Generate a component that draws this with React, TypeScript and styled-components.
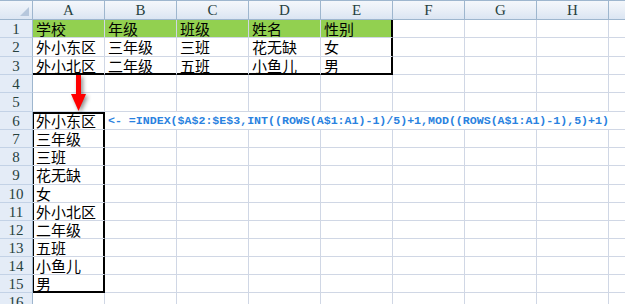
import React from 'react'
import styled, { createGlobalStyle } from 'styled-components'

const GlobalStyle = createGlobalStyle`
  html, body {
    margin: 0;
    padding: 0;
    background: #ffffff;
  }
`

const COLUMNS = ['A', 'B', 'C', 'D', 'E', 'F', 'G', 'H', 'I']
// bottom-border-inclusive heights of rows 1..16
const ROW_HEIGHTS = [18, 19, 18, 18, 19, 18, 18, 18, 19, 18, 18, 18, 18, 18, 18, 18]

const FORMULA = '<- =INDEX($A$2:$E$3,INT((ROWS(A$1:A1)-1)/5)+1,MOD((ROWS(A$1:A1)-1),5)+1)'

const SOURCE: string[][] = [
  ['学校', '年级', '班级', '姓名', '性别'],
  ['外小东区', '三年级', '三班', '花无缺', '女'],
  ['外小北区', '二年级', '五班', '小鱼儿', '男'],
]

const RESULT = ['外小东区', '三年级', '三班', '花无缺', '女', '外小北区', '二年级', '五班', '小鱼儿', '男']

const Sheet = styled.div`
  position: relative;
  width: 625px;
  height: 304px;
  overflow: hidden;
  display: grid;
  grid-template-columns: 33px repeat(9, 72px);
  grid-auto-rows: min-content;
  background: #ffffff;
`

const Corner = styled.div`
  position: relative;
  box-sizing: border-box;
  height: 20px;
  border-top: 1px solid #9eb6ce;
  border-right: 1px solid #9eb6ce;
  border-bottom: 1px solid #9eb6ce;
  background: linear-gradient(#f2f6fb, #dce6f3);

  &::after {
    content: '';
    position: absolute;
    right: 3px;
    bottom: 3px;
    border-style: solid;
    border-width: 0 0 9px 9px;
    border-color: transparent transparent #b6c7dc transparent;
  }
`

const ColHeader = styled.div`
  height: 20px;
  box-sizing: border-box;
  border-top: 1px solid #9eb6ce;
  border-right: 1px solid #9eb6ce;
  border-bottom: 1px solid #9eb6ce;
  background: linear-gradient(#f4f7fb 0%, #e9eff7 50%, #dbe5f2 100%);
  color: #27413e;
  font-family: 'Liberation Serif', 'DejaVu Serif', serif;
  font-size: 15px;
  line-height: 19px;
  text-align: center;
`

const RowHeader = styled.div<{ $h: number }>`
  height: ${({ $h }) => $h}px;
  box-sizing: border-box;
  border-right: 1px solid #9eb6ce;
  border-bottom: 1px solid #c3d2e6;
  background: #e4ecf7;
  color: #27413e;
  font-family: 'Liberation Serif', 'DejaVu Serif', serif;
  font-size: 15px;
  line-height: ${({ $h }) => $h}px;
  text-align: center;
`

const Cell = styled.div<{
  $h: number
  $fill?: string
  $thickRight?: boolean
  $thickBottom?: boolean
  $thickTop?: boolean
  $thickLeft?: boolean
}>`
  height: ${({ $h }) => $h}px;
  box-sizing: border-box;
  padding-left: 3px;
  border-right: 1px solid ${({ $thickRight }) => ($thickRight ? '#000' : '#d0d7e5')};
  border-bottom: 1px solid ${({ $thickBottom }) => ($thickBottom ? '#000' : '#d0d7e5')};
  background: ${({ $fill }) => $fill || '#ffffff'};
  box-shadow: ${({ $thickRight, $thickBottom, $thickTop, $thickLeft }) =>
    [
      $thickRight && 'inset -1px 0 0 #000',
      $thickBottom && 'inset 0 -1px 0 #000',
      $thickTop && 'inset 0 2px 0 #000',
      $thickLeft && 'inset 1px 0 0 #000',
    ]
      .filter(Boolean)
      .join(', ') || 'none'};
  color: #000;
  font-family: 'Noto Sans CJK SC', 'Noto Sans', sans-serif;
  font-size: 15px;
  line-height: ${({ $h }) => $h - 1}px;
  white-space: nowrap;
`

const FormulaCell = styled.div<{ $h: number }>`
  grid-column: span 8;
  height: ${({ $h }) => $h}px;
  box-sizing: border-box;
  padding-left: 3px;
  border-bottom: 1px solid #d0d7e5;
  color: #2a82e0;
  font-family: 'Liberation Mono', 'DejaVu Sans Mono', monospace;
  font-weight: bold;
  font-size: 11.6px;
  line-height: ${({ $h }) => $h - 1}px;
  white-space: nowrap;
`

const Arrow = styled.svg`
  position: absolute;
  left: 70px;
  top: 75px;
  filter: drop-shadow(2px 2px 2px rgba(0, 0, 0, 0.45));
`

const rowCells = (rowIndex: number, h: number) => {
  const row = rowIndex + 1
  const cells: React.ReactNode[] = []

  if (row === 6) {
    cells.push(
      <Cell key='A' $h={h} $thickTop $thickRight $thickLeft>
        {RESULT[0]}
      </Cell>,
    )
    cells.push(
      <FormulaCell key='B' $h={h}>
        {FORMULA}
      </FormulaCell>,
    )
    return cells
  }

  COLUMNS.forEach((col, ci) => {
    let text = ''
    let fill: string | undefined
    let thickRight = false
    let thickBottom = false
    let thickLeft = false

    if (row <= 3 && ci < 5) {
      text = SOURCE[row - 1][ci]
      if (row === 1) fill = '#92d050'
      if (ci === 4) thickRight = true
      if (row === 3) thickBottom = true
    }
    if (row >= 7 && row <= 15 && ci === 0) {
      text = RESULT[row - 6]
      thickRight = true
      thickLeft = true
      if (row === 15) thickBottom = true
    }

    cells.push(
      <Cell
        key={col}
        $h={h}
        $fill={fill}
        $thickRight={thickRight}
        $thickBottom={thickBottom}
        $thickLeft={thickLeft}
      >
        {text}
      </Cell>,
    )
  })
  return cells
}

export default function App() {
  return (
    <>
      <GlobalStyle />
      <Sheet>
        <Corner />
        {COLUMNS.map((col, i) => (
          // the last column is only partly on screen, its letter falls outside
          <ColHeader key={col}>{i < COLUMNS.length - 1 ? col : ''}</ColHeader>
        ))}

        {ROW_HEIGHTS.map((h, i) => (
          <React.Fragment key={i}>
            <RowHeader $h={h}>{i + 1}</RowHeader>
            {rowCells(i, h)}
          </React.Fragment>
        ))}

        <Arrow width='18' height='37' viewBox='0 0 18 37'>
          <rect x='6' y='0' width='5' height='20' fill='#ff0000' />
          <polygon points='1,19 16,19 8.5,36' fill='#ff0000' />
        </Arrow>
      </Sheet>
    </>
  )
}
